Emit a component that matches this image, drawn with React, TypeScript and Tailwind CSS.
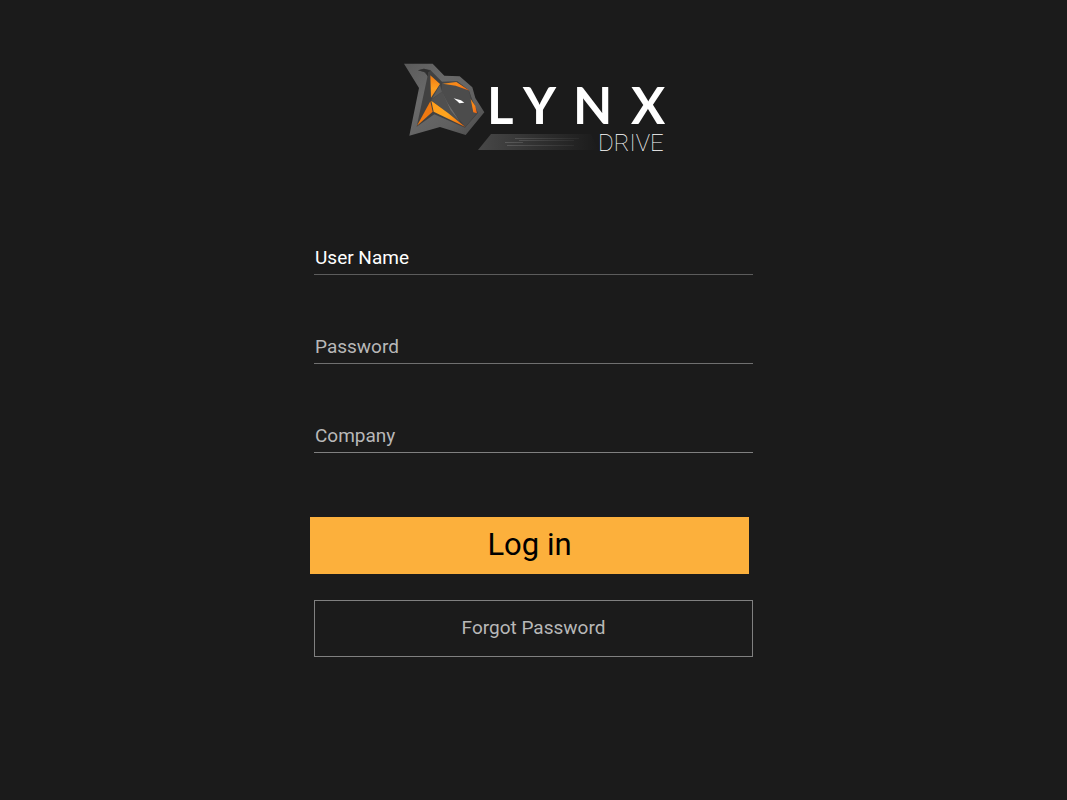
import React from 'react'

const Logo = () => {
  return (
    <svg width="260" height="90" viewBox="0 0 260 90" className="overflow-visible" role="img" aria-label="Lynx Drive">
      <defs>
        <linearGradient id="edge" x1="0" y1="0" x2="1" y2="1">
          <stop offset="0" stopColor="#5a5a5a" />
          <stop offset="0.35" stopColor="#6a6a6a" />
          <stop offset="0.7" stopColor="#606060" />
          <stop offset="1" stopColor="#484848" />
        </linearGradient>
        <linearGradient id="flame" x1="0" y1="0" x2="1" y2="1">
          <stop offset="0" stopColor="#f58a14" />
          <stop offset="0.5" stopColor="#f9861a" />
          <stop offset="1" stopColor="#ee5f12" />
        </linearGradient>
        <linearGradient id="ear" x1="0" y1="0" x2="0" y2="1">
          <stop offset="0" stopColor="#f07a12" />
          <stop offset="0.6" stopColor="#ff9f20" />
          <stop offset="1" stopColor="#f28a1c" />
        </linearGradient>
        <linearGradient id="jaw" x1="0" y1="0" x2="1" y2="1">
          <stop offset="0" stopColor="#ff9c1c" />
          <stop offset="0.5" stopColor="#ffa51e" />
          <stop offset="1" stopColor="#f0640c" />
        </linearGradient>
        <linearGradient id="trail" x1="0" y1="0" x2="1" y2="0">
          <stop offset="0" stopColor="#484848" />
          <stop offset="0.5" stopColor="#303030" />
          <stop offset="1" stopColor="#1b1b1b" />
        </linearGradient>
        <linearGradient id="streak" x1="0" y1="0" x2="1" y2="0">
          <stop offset="0" stopColor="#5a5a5a" />
          <stop offset="1" stopColor="#2a2a2a" />
        </linearGradient>
      </defs>

      {/* lynx head */}
      <g transform="translate(-4 -8) scale(0.3333)">
        <path d="M12 26 98 26 133 62 179 64 217 97 226 129 253 172 197 240 120 216 28 242 57 99Z" fill="url(#edge)" />
        <path d="M54 46 72 41 91 45 126 80 172 79 207 106 216 132 234 174 195 218 103 178 50 215 83 62 72 51Z" fill="#414141" />
        <path d="M54 46 72 41 92 47 84 52 84 65 76 52Z" fill="#303030" />
        <path d="M126 83 170 80 206 107 215 137 230 175 196 215 148 158 125 112Z" fill="#4c4c4c" />
        <path d="M93 135 126 110 150 156 182 205Z" fill="#505050" />
        <path d="M126 110 143 145 180 200 152 166Z" fill="#6e6e6e" />
        <path d="M120 90 126 110 95 132Z" fill="#5c5c5c" />
        <path d="M91 61 120 87 93 128Z" fill="url(#ear)" />
        <path d="M91 139 98 170 51 212Z" fill="#ee7810" />
        <path d="M94 137 144 174 196 216 101 170Z" fill="url(#jaw)" />
        <path d="M128 86 169 81 209 107 167 92Z" fill="url(#flame)" />
        <path d="M212 132 226 153 231 175 220 172Z" fill="url(#flame)" />
        <path d="M161 130 183 136 193 143 178 145 172 139Z" fill="#ffffff" />
      </g>

      {/* speed trail */}
      <path d="M87 71H187L194 87H74Z" fill="url(#trail)" />
      <path d="M111 75H175V76H111ZM115 77H170V78H115ZM101 79H119V80H101ZM103 82H170V83H103Z" fill="url(#streak)" />

      <text x="83 119 169 227" y="61" fill="#ffffff" fontSize="51" fontWeight="700" fontFamily="Lato, sans-serif">
        LYNX
      </text>
      <text x="194" y="88" fill="#ffffff" fontSize="24" fontWeight="100" fontFamily="Roboto, sans-serif">
        DRIVE
      </text>
    </svg>
  )
}

const fields = [
  { id: 'username', label: 'User Name', type: 'text', color: 'border-[#5c5c5c] placeholder:text-white' },
  { id: 'password', label: 'Password', type: 'password', color: 'border-[#707070] placeholder:text-[#b8b8b8]' },
  { id: 'company', label: 'Company', type: 'text', color: 'border-[#808080] placeholder:text-[#b8b8b8]' },
]

const App = () => {
  return (
    <main className="flex flex-col items-center min-h-screen px-4 pt-[63px] pb-16 bg-[#1b1b1b] font-['Roboto',sans-serif]">
      <Logo />
      <form className="w-full max-w-[447px] mt-[91px]" onSubmit={(e) => e.preventDefault()}>
        <div className="flex flex-col gap-[58px] px-1">
          {fields.map((field) => (
            <div key={field.id} className="flex flex-col">
              <label htmlFor={field.id} className="sr-only">
                {field.label}
              </label>
              <input
                id={field.id}
                type={field.type}
                placeholder={field.label}
                className={`w-full h-[31px] pl-px pb-1 border-b bg-transparent text-[19px] leading-6 text-white outline-none placeholder:opacity-100 ${field.color}`}
              />
            </div>
          ))}
        </div>
        <div className="pr-2 mt-16">
          <button
            type="submit"
            className="w-full h-[57px] pb-0.5 bg-[#fcb03c] hover:bg-[#ffbd57] text-[31px] leading-8 text-black cursor-pointer"
          >
            Log in
          </button>
        </div>
        <div className="px-1 mt-[26px]">
          <button
            type="button"
            className="w-full h-[57px] pb-0.5 border border-[#808080] text-[19px] leading-6 text-[#b8b8b8] cursor-pointer"
          >
            Forgot Password
          </button>
        </div>
      </form>
    </main>
  )
}

export default App
